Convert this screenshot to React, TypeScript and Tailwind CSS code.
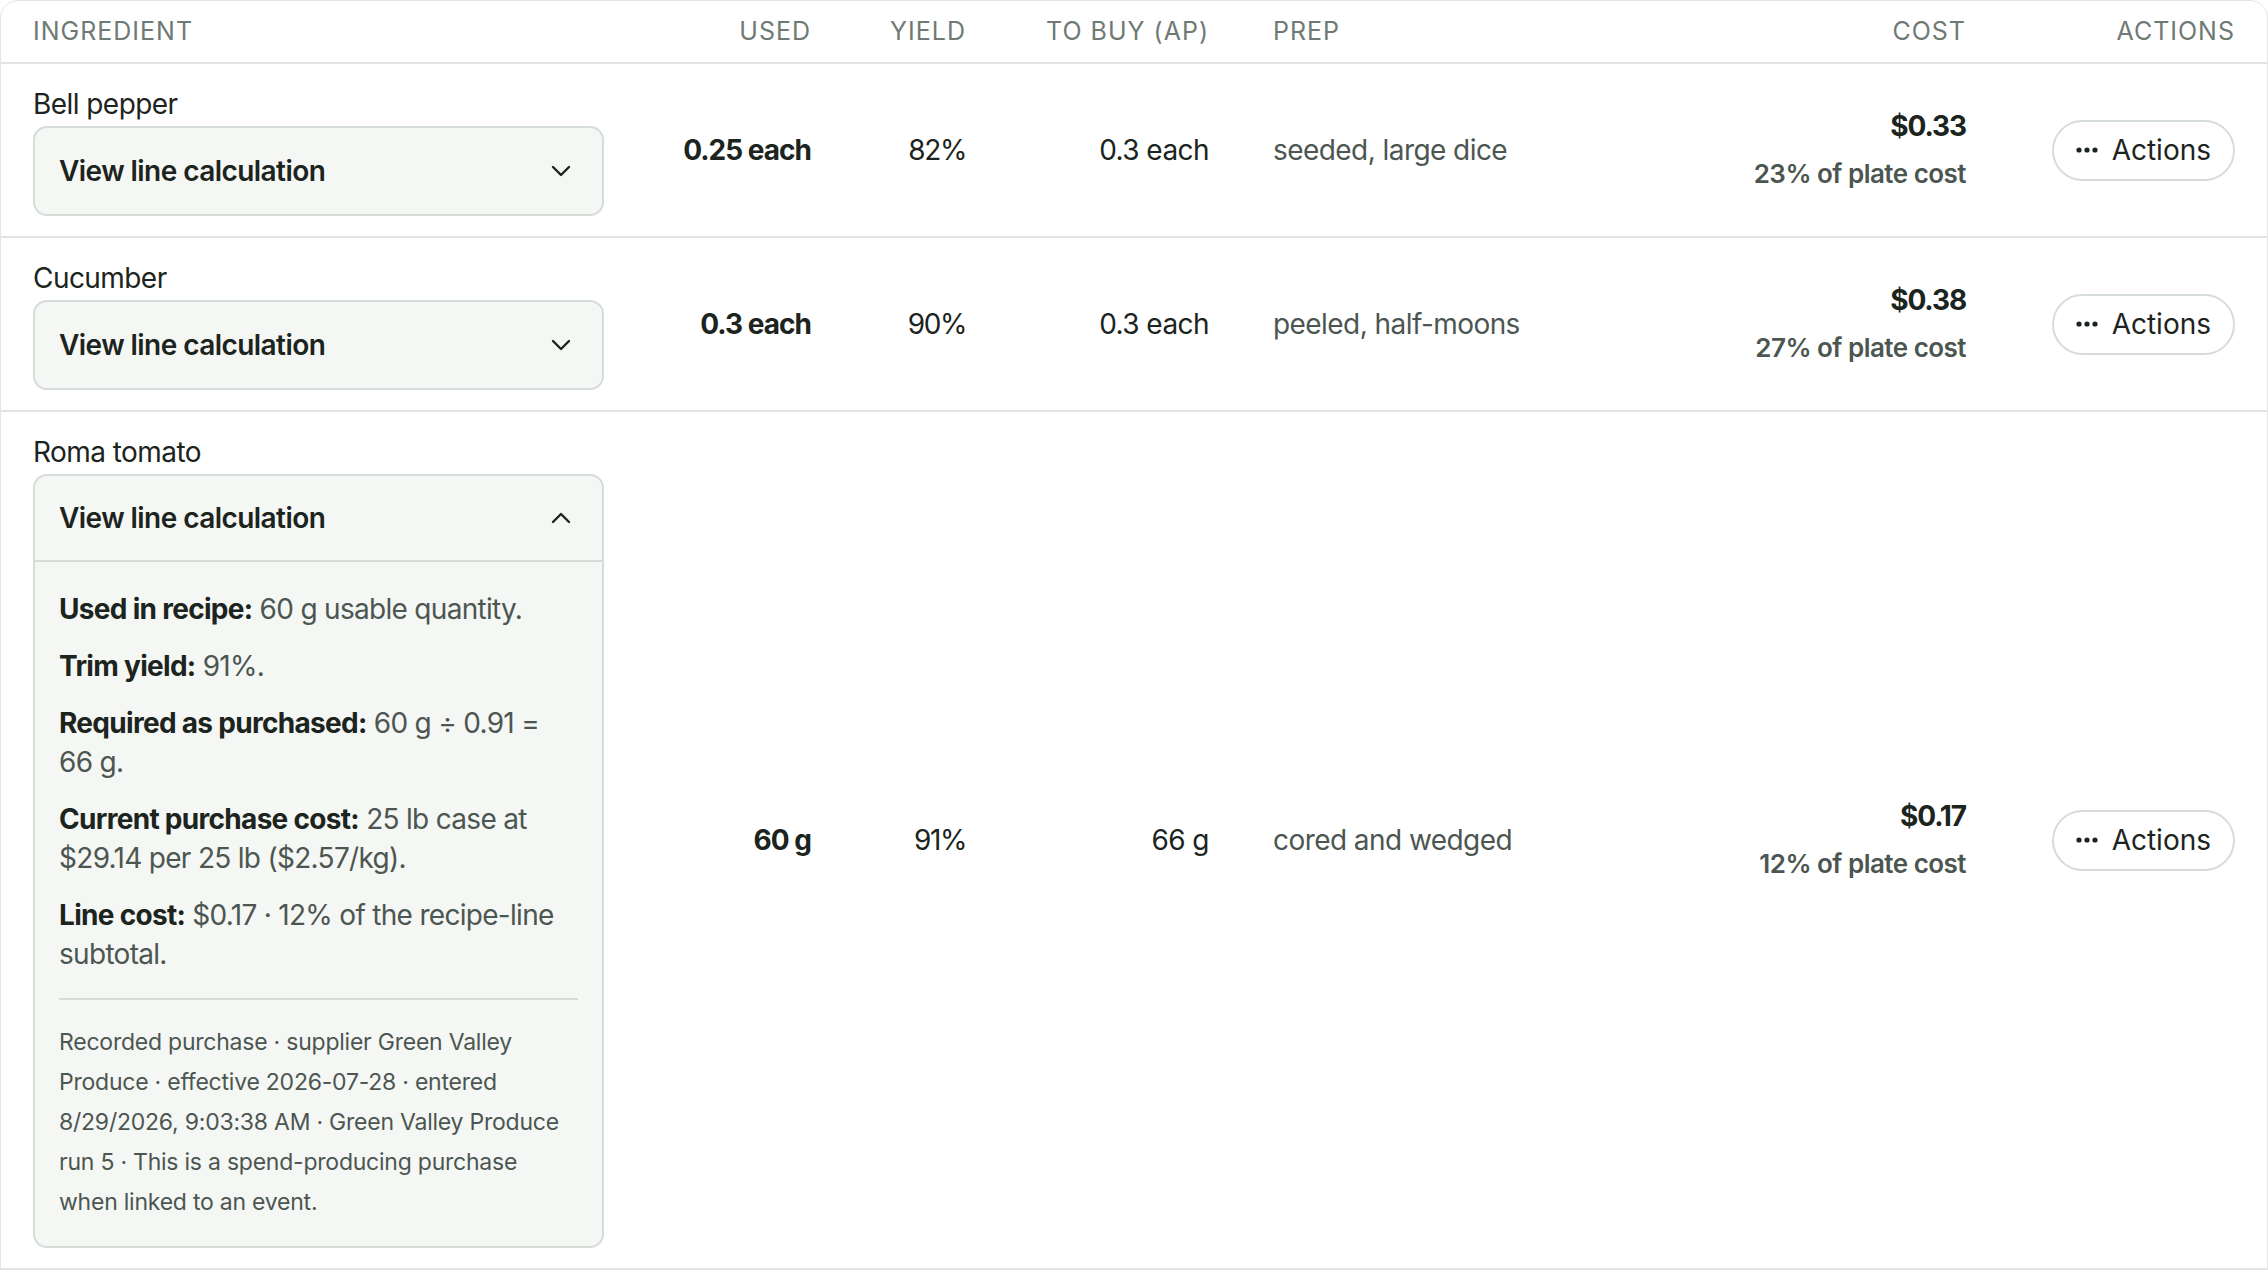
import React, { useState } from 'react';

type Line = {
  name: string;
  used: string;
  yieldPct: string;
  toBuy: string;
  prep: string;
  cost: string;
  share: string;
  open?: boolean;
};

const lines: Line[] = [
  { name: 'Bell pepper', used: '0.25 each', yieldPct: '82%', toBuy: '0.3 each', prep: 'seeded, large dice', cost: '$0.33', share: '23% of plate cost' },
  { name: 'Cucumber', used: '0.3 each', yieldPct: '90%', toBuy: '0.3 each', prep: 'peeled, half-moons', cost: '$0.38', share: '27% of plate cost' },
  { name: 'Roma tomato', used: '60 g', yieldPct: '91%', toBuy: '66 g', prep: 'cored and wedged', cost: '$0.17', share: '12% of plate cost', open: true },
];

const cols = 'grid grid-cols-[635px_207px_155px_243px_440px_317px_1fr]';

function Chevron({ up }: { up?: boolean }) {
  return (
    <svg width="20" height="12" viewBox="0 0 20 12" fill="none" className="shrink-0">
      <polyline
        points={up ? '2,10 10,2 18,10' : '2,2 10,10 18,2'}
        stroke="#1c2420"
        strokeWidth="2.4"
        strokeLinecap="round"
        strokeLinejoin="round"
      />
    </svg>
  );
}

function Dots() {
  return (
    <svg width="22" height="6" viewBox="0 0 22 6" className="shrink-0">
      <circle cx="3" cy="3" r="2.6" fill="#1c2420" />
      <circle cx="11" cy="3" r="2.6" fill="#1c2420" />
      <circle cx="19" cy="3" r="2.6" fill="#1c2420" />
    </svg>
  );
}

function Calc({ defaultOpen }: { defaultOpen?: boolean }) {
  const [open, setOpen] = useState(!!defaultOpen);
  return (
    <div className="border-2 border-[#d6ddd9] rounded-[14px] bg-[#f5f7f5]">
      <button
        onClick={() => setOpen(!open)}
        className={`w-full h-[86px] flex items-center justify-between pl-6 pr-[31px] text-left ${open ? 'border-b-2 border-[#d6ddd9]' : ''}`}
      >
        <span className="text-[28px] font-semibold text-[#1c2420] tracking-[-0.02em]">View line calculation</span>
        <Chevron up={open} />
      </button>
      {open && (
        <div className="px-6 pt-[28px] pb-6">
          <div className="flex flex-col gap-[18px] text-[28px] leading-[39px] tracking-[-0.025em] text-[#4c5651]">
            <p><b className="font-bold text-[#1c2420]">Used in recipe:</b> 60 g usable quantity.</p>
            <p><b className="font-bold text-[#1c2420]">Trim yield:</b> 91%.</p>
            <p><b className="font-bold text-[#1c2420]">Required as purchased:</b> 60 g ÷ 0.91 = 66 g.</p>
            <p><b className="font-bold text-[#1c2420]">Current purchase cost:</b> 25 lb case at $29.14 per 25 lb ($2.57/kg).</p>
            <p><b className="font-bold text-[#1c2420]">Line cost:</b> $0.17 · 12% of the recipe-line subtotal.</p>
          </div>
          <div className="mt-6 pt-[22px] border-t-2 border-[#d6ddd9] text-[23px] leading-[40px] tracking-[-0.01em] text-[#4c5651]">
            Recorded purchase · supplier Green Valley Produce · effective 2026-07-28 · entered 8/29/2026, 9:03:38 AM · Green Valley Produce run 5 · This is a spend-producing purchase when linked to an event.
          </div>
        </div>
      )}
    </div>
  );
}

export default function App() {
  return (
    <div className="min-h-screen bg-white" style={{ fontFamily: 'Inter, "Noto Sans", sans-serif' }}>
      <div className="border border-[#e1e6e3] rounded-t-[18px] overflow-hidden">
        <div className={`${cols} h-[63px] items-center border-b-2 border-[#e1e6e3] text-[25px] uppercase tracking-[0.04em] text-[#6f7a75]`}>
          <div className="px-8">Ingredient</div>
          <div className="px-8 text-right">Used</div>
          <div className="px-8 text-right">Yield</div>
          <div className="px-8 text-right">To buy (AP)</div>
          <div className="px-8">Prep</div>
          <div className="px-8 text-right">Cost</div>
          <div className="px-8 text-right">Actions</div>
        </div>
        {lines.map((l) => (
          <div key={l.name} className={`${cols} items-center border-b-2 border-[#e1e6e3] text-[28px] leading-[40px] tracking-[-0.02em]`}>
            <div className="px-8 py-5">
              <div className="text-[#1c2420] mb-[2px]">{l.name}</div>
              <Calc defaultOpen={l.open} />
            </div>
            <div className="px-8 text-right font-bold tracking-[-0.035em] text-[#1c2420]">{l.used}</div>
            <div className="px-8 text-right tracking-[-0.05em] text-[#1c2420]">{l.yieldPct}</div>
            <div className="px-8 text-right text-[#1c2420]">{l.toBuy}</div>
            <div className="px-8 text-[#4c5651]">{l.prep}</div>
            <div className="px-8 text-right">
              <div className="font-bold tracking-[-0.04em] text-[#1c2420]">{l.cost}</div>
              <div className="mt-2 text-[26px] font-semibold tracking-[-0.02em] text-[#4c5651]">{l.share}</div>
            </div>
            <div className="px-8 flex justify-end">
              <button className="h-[61px] flex items-center gap-[14px] pl-[22px] pr-[22px] rounded-full border-2 border-[#d6ddd9] text-[28px] tracking-normal text-[#1c2420]">
                <Dots />
                Actions
              </button>
            </div>
          </div>
        ))}
      </div>
    </div>
  );
}
